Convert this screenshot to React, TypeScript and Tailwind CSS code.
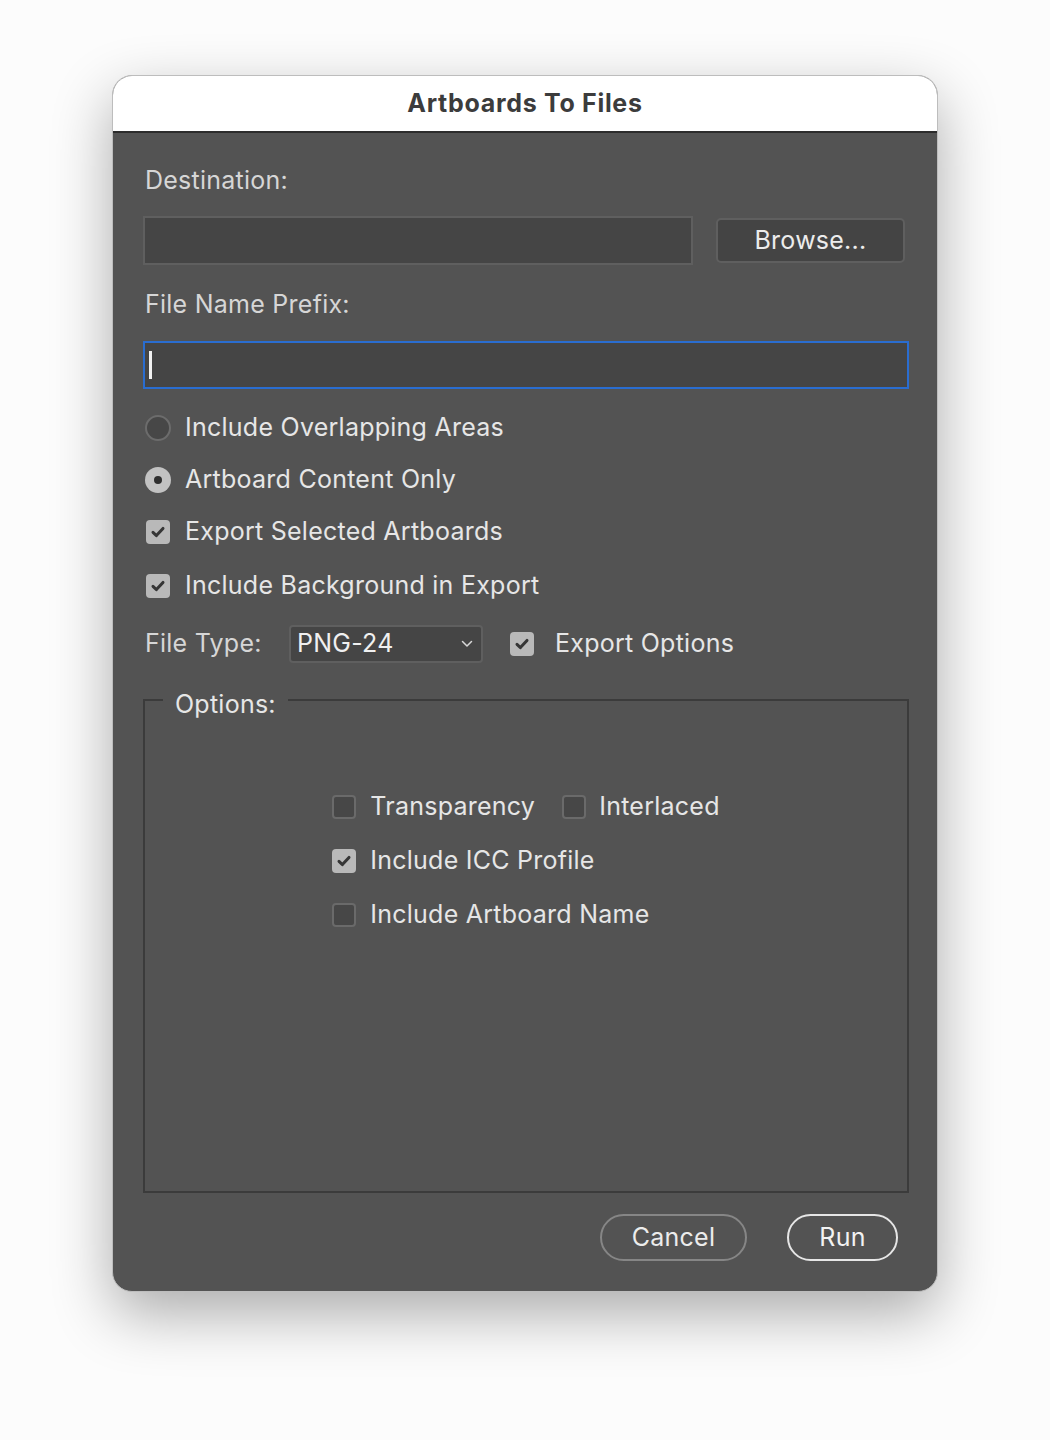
import { useState } from "react"

function Check({ checked }: { checked: boolean }) {
  return checked ? (
    <span className="flex h-[24px] w-[24px] shrink-0 items-center justify-center rounded-[4px] bg-[#b9b9b9]">
      <svg width="18" height="18" viewBox="0 0 18 18" fill="none">
        <path d="M4 9.4 L7.4 12.6 L14 5.4" stroke="#363636" strokeWidth="3" strokeLinecap="round" strokeLinejoin="round" />
      </svg>
    </span>
  ) : (
    <span className="h-[24px] w-[24px] shrink-0 rounded-[4px] border-2 border-[#6a6a6a] bg-[#474747]" />
  )
}

function Radio({ checked }: { checked: boolean }) {
  return checked ? (
    <span className="flex h-[26px] w-[26px] shrink-0 items-center justify-center rounded-full bg-[#c2c2c2]">
      <span className="h-[8px] w-[8px] rounded-full bg-[#2e2e2e]" />
    </span>
  ) : (
    <span className="h-[26px] w-[26px] shrink-0 rounded-full border-2 border-[#6c6c6c] bg-[#474747]" />
  )
}

export default function App() {
  const [opts] = useState({
    overlapping: false,
    selected: true,
    background: true,
    exportOptions: true,
    transparency: false,
    interlaced: false,
    icc: true,
    artboardName: false,
  })

  return (
    <div className="min-h-[1440px] bg-[#fcfcfc] pt-[75px] font-['Inter',sans-serif] text-[25px] tracking-[0.01em] text-[#e6e6e6]">
      <div className="ml-[112px] w-[826px] overflow-hidden rounded-[20px] border border-[#bdbdbd] bg-[#535353] shadow-[0_22px_60px_rgba(0,0,0,0.32)]">
        <div className="flex h-[57px] items-center justify-center border-b-2 border-[#2c2c2c] bg-white text-[25px] font-bold tracking-[0.7px] text-[#3c3c3c]">
          Artboards To Files
        </div>

        <div className="pb-[30px] pl-[30px] pr-[28px]">
          <div className="mt-[31px] pl-[2px] leading-[32px] text-[#d6d6d6]">Destination:</div>
          <div className="mt-[20px] flex items-center gap-[23px]">
            <div className="h-[49px] flex-1 border-2 border-[#5f5f5f] bg-[#454545]" />
            <button className="mr-[4px] h-[45px] w-[189px] rounded-[5px] border-2 border-[#5f5f5f] bg-[#444444] leading-none text-[#ececec]">
              Browse...
            </button>
          </div>

          <div className="mt-[23px] pl-[2px] leading-[32px] text-[#d6d6d6]">File Name Prefix:</div>
          <div className="mt-[21px] flex h-[48px] items-center border-2 border-[#2a6dd0] bg-[#454545] pl-[4px]">
            <span className="h-[28px] w-[3px] bg-[#f2f2f2]" />
          </div>

          <div className="mt-[13px] flex h-[52px] items-center gap-[14px] pl-[2px]">
            <Radio checked={opts.overlapping} />
            <span>Include Overlapping Areas</span>
          </div>
          <div className="flex h-[52px] items-center gap-[14px] pl-[2px]">
            <Radio checked={!opts.overlapping} />
            <span>Artboard Content Only</span>
          </div>
          <div className="flex h-[52px] items-center gap-[15px] pl-[3px]">
            <Check checked={opts.selected} />
            <span>Export Selected Artboards</span>
          </div>
          <div className="mt-[2px] flex h-[52px] items-center gap-[15px] pl-[3px]">
            <Check checked={opts.background} />
            <span>Include Background in Export</span>
          </div>

          <div className="mt-[6px] flex h-[52px] items-center pl-[2px]">
            <span className="w-[144px] text-[#d6d6d6]">File Type:</span>
            <div className="flex h-[38px] w-[194px] items-center justify-between rounded-[4px] border-2 border-[#5f5f5f] bg-[#454545] pl-[6px] pr-[8px]">
              <span className="text-[#f0f0f0]">PNG-24</span>
              <svg width="12" height="8" viewBox="0 0 12 8" fill="none">
                <path d="M1.5 1.5 L6 6 L10.5 1.5" stroke="#d8d8d8" strokeWidth="1.5" strokeLinecap="round" strokeLinejoin="round" />
              </svg>
            </div>
            <div className="ml-[27px] flex items-center gap-[21px]">
              <Check checked={opts.exportOptions} />
              <span>Export Options</span>
            </div>
          </div>

          <fieldset className="mt-[10px] h-[513px] border-2 border-[#3b3b3b]">
            <legend className="ml-[18px] px-[12px] pt-[8px] leading-[32px]">Options:</legend>
            <div className="mt-[60px] flex justify-center">
              <div className="flex flex-col">
                <div className="flex h-[54px] items-center">
                  <Check checked={opts.transparency} />
                  <span className="ml-[14px]">Transparency</span>
                  <span className="ml-[27px] flex">
                    <Check checked={opts.interlaced} />
                  </span>
                  <span className="ml-[13px]">Interlaced</span>
                </div>
                <div className="flex h-[54px] items-center gap-[14px]">
                  <Check checked={opts.icc} />
                  <span>Include ICC Profile</span>
                </div>
                <div className="flex h-[54px] items-center gap-[14px]">
                  <Check checked={opts.artboardName} />
                  <span>Include Artboard Name</span>
                </div>
              </div>
            </div>
          </fieldset>

          <div className="mt-[21px] flex justify-end gap-[40px] pr-[11px]">
            <button className="h-[47px] w-[147px] rounded-full border-2 border-[#868686] leading-none text-[#ececec]">
              Cancel
            </button>
            <button className="h-[47px] w-[111px] rounded-full border-2 border-[#e6e6e6] leading-none text-[#f2f2f2]">
              Run
            </button>
          </div>
        </div>
      </div>
    </div>
  )
}
